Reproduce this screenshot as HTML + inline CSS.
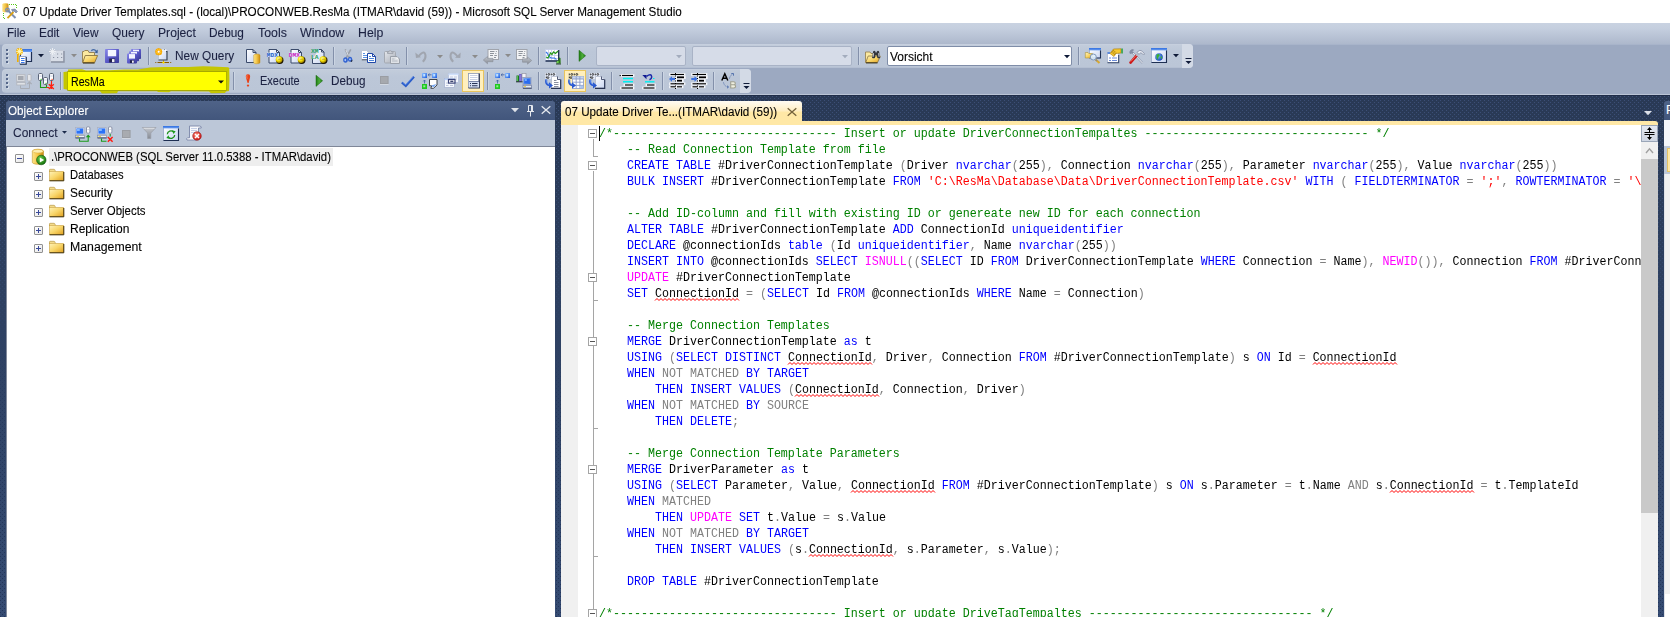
<!DOCTYPE html>
<html>
<head>
<meta charset="utf-8">
<title>SSMS</title>
<style>
html,body{margin:0;padding:0;}
body{width:1670px;height:617px;overflow:hidden;background:#fff;position:relative;font-family:"Liberation Sans",sans-serif;font-size:12px;color:#000;}
.abs,.r{position:absolute;}
svg{position:absolute;overflow:visible;}
.tx{position:absolute;white-space:pre;line-height:15px;font-size:12px;transform-origin:0 0;-webkit-text-stroke:0.1px;}
/* title */
#title{left:0;top:0;width:1670px;height:23px;background:#fff;}
/* menu */
#menu{left:0;top:23px;width:1670px;height:21px;background:linear-gradient(#c9d2e1,#c5cfdf 25%,#adb8cc);}
/* toolbars */
#tbarea{left:0;top:44px;width:1670px;height:50px;background:#9ca9c1;}
#tbtop{left:0;top:44px;width:1670px;height:1px;background:#a8b4ca;}
.tb{position:absolute;box-sizing:border-box;background:linear-gradient(#c2ccdb,#bcc7d8 30%,#bbc6d7);border-radius:4px;border:1px solid #c6cfde;border-bottom-color:#b4bfd2;}
.sep{position:absolute;width:1px;height:18px;background:#8390aa;box-shadow:1px 0 0 rgba(220,228,240,0.5);}
.gd{position:absolute;width:2px;height:2px;background:#56678a;box-shadow:1px 1px 0 rgba(235,240,248,0.55);}
.cb{position:absolute;box-sizing:border-box;border:1px solid #a9b3c6;background:#d6dce8;border-radius:2px;}
.hl{position:absolute;box-sizing:border-box;border:1px solid #e8c45e;background:#ffefbd;}
/* dark background */
#dark{left:0;top:95px;width:1670px;height:522px;background:#293955;}
/* object explorer */
#oehead{left:6px;top:101px;width:549px;height:19px;background:linear-gradient(#4f6388,#42567c);border-radius:3px 3px 0 0;}
#oetb{left:6px;top:120px;width:549px;height:26px;background:#bcc7d8;}
#oetree{left:6px;top:146px;width:549px;height:471px;background:#fff;border-top:1px solid #7f8798;border-left:1px solid #828a9c;box-sizing:border-box;}
#sel{left:49px;top:148px;width:284px;height:18px;background:#eeeeee;}
.ex{position:absolute;width:9px;height:9px;box-sizing:border-box;border:1px solid #919191;background:linear-gradient(135deg,#fff,#e6e6e6);border-radius:1px;}
.ex i{position:absolute;left:1px;top:3px;width:5px;height:1px;background:#3a4a9a;}
.ex b{position:absolute;left:3px;top:1px;width:1px;height:5px;background:#3a4a9a;}
/* editor */
#tab{left:561px;top:101px;width:241px;height:21px;background:linear-gradient(#fffcf4,#ffefc4 45%,#ffe8a6 55%,#ffe8a6);border-radius:3px 3px 0 0;}
#tabline{left:561px;top:121px;width:1097px;height:4px;background:#ffe8a6;border-radius:0 3px 0 0;}
#ed{left:561px;top:125px;width:1080px;height:492px;background:#fff;overflow:hidden;}
#margin{left:0;top:0;width:17px;height:492px;background:#f0f0f0;}
#code{left:38px;top:0.5px;width:1042px;height:492px;overflow:hidden;font-family:"Liberation Mono",monospace;font-size:11.667px;color:#000;}
.ln{height:16px;line-height:16px;white-space:pre;transform:scaleY(1.1);transform-origin:0 11.1px;}
.k{color:#0000ff}.c{color:#008000}.s{color:#ff0000}.f{color:#ff00ff}.g{color:#808080}
.ob{position:absolute;left:27px;width:9px;height:9px;box-sizing:border-box;border:1px solid #a5a5a5;background:#fff;}
.ob i{position:absolute;left:1px;top:3px;width:5px;height:1px;background:#555;}
.ol{position:absolute;background:#a5a5a5;}
#vs{left:1641px;top:125px;width:17px;height:492px;background:#f0f0f0;}
#vsthumb{left:1641px;top:159px;width:17px;height:354px;background:#c9c9c9;}
#vssplit{left:1641px;top:125px;width:17px;height:17px;box-sizing:border-box;border:1px solid #9aa6b8;background:linear-gradient(#e4e8f0,#cfd6e3);}
/* right panel sliver */
#rp{left:1664px;top:120px;width:6px;height:497px;background:linear-gradient(#f0f0f0,#f0f0f0 474px,#fff 474px);}
#rph{left:1664px;top:101px;width:6px;height:19px;background:linear-gradient(#4f6388,#42567c);border-radius:3px 0 0 0;overflow:hidden;}
#rp1{left:1664px;top:120px;width:6px;height:26px;background:#f4f6fa;}
#rp2{left:1664px;top:146px;width:6px;height:28px;background:#bcc7d8;}
#rp3{left:1667px;top:148px;width:3px;height:24px;background:#ffe8a6;border:1px solid #e5c365;border-right:0;box-sizing:border-box;}
#rp4{left:1664px;top:174px;width:1px;height:443px;background:#dfe2e8;}
</style>
</head>
<body>
<div id="title" class="abs"></div>
<div id="menu" class="abs"></div>
<div id="tbarea" class="abs"></div>
<div id="tbtop" class="abs"></div>
<div class="tb" style="left:2px;top:44px;width:1191px;height:24px"></div>
<div class="tb" style="left:2px;top:69px;width:749px;height:24px"></div>
<div class="r" style="left:1182px;top:44px;width:11px;height:24px;background:#d3dae6;border-radius:0 4px 4px 0"></div>
<div class="r" style="left:740px;top:69px;width:11px;height:24px;background:#d3dae6;border-radius:0 4px 4px 0"></div>
<!-- grips -->
<div class="gd" style="left:6px;top:49px"></div><div class="gd" style="left:6px;top:53px"></div><div class="gd" style="left:6px;top:57px"></div><div class="gd" style="left:6px;top:61px"></div>
<div class="gd" style="left:6px;top:74px"></div><div class="gd" style="left:6px;top:78px"></div><div class="gd" style="left:6px;top:82px"></div><div class="gd" style="left:6px;top:86px"></div>
<!-- separators row1 -->
<div class="sep" style="left:148px;top:47px"></div><div class="sep" style="left:333px;top:47px"></div><div class="sep" style="left:406px;top:47px"></div>
<div class="sep" style="left:538px;top:47px"></div><div class="sep" style="left:567px;top:47px"></div><div class="sep" style="left:858px;top:47px"></div><div class="sep" style="left:1078px;top:47px"></div>
<!-- separators row2 -->
<div class="sep" style="left:60px;top:72px"></div><div class="sep" style="left:233px;top:72px"></div><div class="sep" style="left:487px;top:72px"></div>
<div class="sep" style="left:538px;top:72px"></div><div class="sep" style="left:611px;top:72px"></div><div class="sep" style="left:662px;top:72px"></div><div class="sep" style="left:713px;top:72px"></div>
<!-- combos row1 -->
<div class="cb" style="left:596px;top:46px;width:90px;height:20px"></div>
<div class="cb" style="left:692px;top:46px;width:160px;height:20px"></div>
<div class="cb" style="left:887px;top:46px;width:185px;height:20px;background:#fff;border-color:#7f8da8"></div>
<!-- highlighted buttons row2 -->
<div class="hl" style="left:462px;top:70px;width:22px;height:22px"></div>
<div class="hl" style="left:564px;top:70px;width:22px;height:22px"></div>
<!-- yellow highlighter combo -->
<svg style="left:60px;top:64px" width="176" height="32" viewBox="60 64 176 32">
<path d="M63.5 72 L68 71.5 L68 69.5 L82 69.3 L86 70.4 L110 70.3 L124 69.6 L138 69.4 L150 67.6 L165 67 L188 67 L203 66.2 L212 66.4 L228 67.2 L229.2 68 L229.4 80 L229 91 L226 91.4 L225 93 L211 93.2 L209 91.4 L171 91.3 L169 92.2 L158 92 L157 91.2 L118 91.2 L117 93.2 L102 93.4 L100 91.3 L70 91.2 L68 90.5 L67 89.4 L63.6 89 Z" fill="#c5c600"/>
<rect x="67.5" y="72" width="159" height="18" fill="#ffff00"/>
<path d="M67.5 71.5 H226.5 V90.5 H67.5 Z" fill="none" stroke="#9a9c00" stroke-width="1" opacity="0.7"/>
<path d="M218 80.5 h6 l-3 3 z" fill="#111"/>
</svg>
<div id="dark" class="abs"></div>
<div class="r" style="left:0;top:94px;width:1670px;height:1px;background:#bac4d6"></div>
<svg style="left:0;top:95px" width="1670" height="522" viewBox="0 0 1670 522" shape-rendering="crispEdges">
<defs>
<pattern id="dp" width="4" height="4" patternUnits="userSpaceOnUse"><rect x="0" y="1" width="1" height="1" fill="#fff"/><rect x="2" y="3" width="1" height="1" fill="#fff"/></pattern>
<mask id="dm"><rect width="1670" height="522" fill="url(#dp)"/></mask>
<linearGradient id="bgG" x1="0" y1="0" x2="0" y2="1"><stop offset="0" stop-color="#293955"/><stop offset="1" stop-color="#354b72"/></linearGradient>
<linearGradient id="dotG" x1="0" y1="0" x2="0" y2="1"><stop offset="0" stop-color="#3d5077"/><stop offset="0.35" stop-color="#33476c"/><stop offset="0.6" stop-color="#283a5e"/><stop offset="1" stop-color="#24365a"/></linearGradient>
</defs>
<rect width="1670" height="522" fill="url(#bgG)"/>
<rect width="1670" height="522" fill="url(#dotG)" mask="url(#dm)"/>
<rect width="1670" height="1" fill="#1f2d49"/>
</svg>
<div id="oehead" class="abs"></div>
<div id="oetb" class="abs"></div>
<div id="oetree" class="abs"></div>
<div id="sel" class="abs"></div>
<!-- tree expanders -->
<div class="ex" style="left:15px;top:154px"><i></i></div>
<div class="ex" style="left:34px;top:172px"><i></i><b></b></div>
<div class="ex" style="left:34px;top:190px"><i></i><b></b></div>
<div class="ex" style="left:34px;top:208px"><i></i><b></b></div>
<div class="ex" style="left:34px;top:226px"><i></i><b></b></div>
<div class="ex" style="left:34px;top:244px"><i></i><b></b></div>
<div id="tab" class="abs"></div>
<div id="tabline" class="abs"></div>
<div id="ed" class="abs">
<div id="margin" class="abs"></div>
<!-- outlining -->
<div class="ol" style="left:32px;top:14px;width:1px;height:18px"></div><div class="ol" style="left:32px;top:31px;width:5px;height:1px"></div>
<div class="ol" style="left:32px;top:46px;width:1px;height:446px"></div>
<div class="ol" style="left:32px;top:175px;width:5px;height:1px"></div>
<div class="ol" style="left:32px;top:303px;width:5px;height:1px"></div>
<div class="ol" style="left:32px;top:431px;width:5px;height:1px"></div>
<div class="ob" style="top:4px"><i></i></div>
<div class="ob" style="top:36px"><i></i></div>
<div class="ob" style="top:148px"><i></i></div>
<div class="ob" style="top:212px"><i></i></div>
<div class="ob" style="top:340px"><i></i></div>
<div class="ob" style="top:484px"><i></i></div>
<div class="r" style="left:38px;top:1px;width:1px;height:15px;background:#000"></div>
<svg style="left:94px;top:173px" width="84" height="3" viewBox="0 0 84 3"><path d="M0 2.5 L2 0.5 L4 2.5 L6 0.5 L8 2.5 L10 0.5 L12 2.5 L14 0.5 L16 2.5 L18 0.5 L20 2.5 L22 0.5 L24 2.5 L26 0.5 L28 2.5 L30 0.5 L32 2.5 L34 0.5 L36 2.5 L38 0.5 L40 2.5 L42 0.5 L44 2.5 L46 0.5 L48 2.5 L50 0.5 L52 2.5 L54 0.5 L56 2.5 L58 0.5 L60 2.5 L62 0.5 L64 2.5 L66 0.5 L68 2.5 L70 0.5 L72 2.5 L74 0.5 L76 2.5 L78 0.5 L80 2.5 L82 0.5 L84 2.5" fill="none" stroke="#ff0000" stroke-width="1"/></svg>
<svg style="left:227px;top:237px" width="84" height="3" viewBox="0 0 84 3"><path d="M0 2.5 L2 0.5 L4 2.5 L6 0.5 L8 2.5 L10 0.5 L12 2.5 L14 0.5 L16 2.5 L18 0.5 L20 2.5 L22 0.5 L24 2.5 L26 0.5 L28 2.5 L30 0.5 L32 2.5 L34 0.5 L36 2.5 L38 0.5 L40 2.5 L42 0.5 L44 2.5 L46 0.5 L48 2.5 L50 0.5 L52 2.5 L54 0.5 L56 2.5 L58 0.5 L60 2.5 L62 0.5 L64 2.5 L66 0.5 L68 2.5 L70 0.5 L72 2.5 L74 0.5 L76 2.5 L78 0.5 L80 2.5 L82 0.5 L84 2.5" fill="none" stroke="#ff0000" stroke-width="1"/></svg>
<svg style="left:752px;top:237px" width="84" height="3" viewBox="0 0 84 3"><path d="M0 2.5 L2 0.5 L4 2.5 L6 0.5 L8 2.5 L10 0.5 L12 2.5 L14 0.5 L16 2.5 L18 0.5 L20 2.5 L22 0.5 L24 2.5 L26 0.5 L28 2.5 L30 0.5 L32 2.5 L34 0.5 L36 2.5 L38 0.5 L40 2.5 L42 0.5 L44 2.5 L46 0.5 L48 2.5 L50 0.5 L52 2.5 L54 0.5 L56 2.5 L58 0.5 L60 2.5 L62 0.5 L64 2.5 L66 0.5 L68 2.5 L70 0.5 L72 2.5 L74 0.5 L76 2.5 L78 0.5 L80 2.5 L82 0.5 L84 2.5" fill="none" stroke="#ff0000" stroke-width="1"/></svg>
<svg style="left:234px;top:269px" width="84" height="3" viewBox="0 0 84 3"><path d="M0 2.5 L2 0.5 L4 2.5 L6 0.5 L8 2.5 L10 0.5 L12 2.5 L14 0.5 L16 2.5 L18 0.5 L20 2.5 L22 0.5 L24 2.5 L26 0.5 L28 2.5 L30 0.5 L32 2.5 L34 0.5 L36 2.5 L38 0.5 L40 2.5 L42 0.5 L44 2.5 L46 0.5 L48 2.5 L50 0.5 L52 2.5 L54 0.5 L56 2.5 L58 0.5 L60 2.5 L62 0.5 L64 2.5 L66 0.5 L68 2.5 L70 0.5 L72 2.5 L74 0.5 L76 2.5 L78 0.5 L80 2.5 L82 0.5 L84 2.5" fill="none" stroke="#ff0000" stroke-width="1"/></svg>
<svg style="left:290px;top:365px" width="84" height="3" viewBox="0 0 84 3"><path d="M0 2.5 L2 0.5 L4 2.5 L6 0.5 L8 2.5 L10 0.5 L12 2.5 L14 0.5 L16 2.5 L18 0.5 L20 2.5 L22 0.5 L24 2.5 L26 0.5 L28 2.5 L30 0.5 L32 2.5 L34 0.5 L36 2.5 L38 0.5 L40 2.5 L42 0.5 L44 2.5 L46 0.5 L48 2.5 L50 0.5 L52 2.5 L54 0.5 L56 2.5 L58 0.5 L60 2.5 L62 0.5 L64 2.5 L66 0.5 L68 2.5 L70 0.5 L72 2.5 L74 0.5 L76 2.5 L78 0.5 L80 2.5 L82 0.5 L84 2.5" fill="none" stroke="#ff0000" stroke-width="1"/></svg>
<svg style="left:829px;top:365px" width="84" height="3" viewBox="0 0 84 3"><path d="M0 2.5 L2 0.5 L4 2.5 L6 0.5 L8 2.5 L10 0.5 L12 2.5 L14 0.5 L16 2.5 L18 0.5 L20 2.5 L22 0.5 L24 2.5 L26 0.5 L28 2.5 L30 0.5 L32 2.5 L34 0.5 L36 2.5 L38 0.5 L40 2.5 L42 0.5 L44 2.5 L46 0.5 L48 2.5 L50 0.5 L52 2.5 L54 0.5 L56 2.5 L58 0.5 L60 2.5 L62 0.5 L64 2.5 L66 0.5 L68 2.5 L70 0.5 L72 2.5 L74 0.5 L76 2.5 L78 0.5 L80 2.5 L82 0.5 L84 2.5" fill="none" stroke="#ff0000" stroke-width="1"/></svg>
<svg style="left:248px;top:429px" width="84" height="3" viewBox="0 0 84 3"><path d="M0 2.5 L2 0.5 L4 2.5 L6 0.5 L8 2.5 L10 0.5 L12 2.5 L14 0.5 L16 2.5 L18 0.5 L20 2.5 L22 0.5 L24 2.5 L26 0.5 L28 2.5 L30 0.5 L32 2.5 L34 0.5 L36 2.5 L38 0.5 L40 2.5 L42 0.5 L44 2.5 L46 0.5 L48 2.5 L50 0.5 L52 2.5 L54 0.5 L56 2.5 L58 0.5 L60 2.5 L62 0.5 L64 2.5 L66 0.5 L68 2.5 L70 0.5 L72 2.5 L74 0.5 L76 2.5 L78 0.5 L80 2.5 L82 0.5 L84 2.5" fill="none" stroke="#ff0000" stroke-width="1"/></svg>
<div id="code" class="abs">
<div class="ln"><span class="c">/*-------------------------------- Insert or update DriverConnectionTempaltes -------------------------------- */</span></div>
<div class="ln">    <span class="c">-- Read Connection Template from file</span></div>
<div class="ln">    <span class="k">CREATE TABLE</span> #DriverConnectionTemplate <span class="g">(</span>Driver <span class="k">nvarchar</span><span class="g">(</span>255<span class="g">),</span> Connection <span class="k">nvarchar</span><span class="g">(</span>255<span class="g">),</span> Parameter <span class="k">nvarchar</span><span class="g">(</span>255<span class="g">),</span> Value <span class="k">nvarchar</span><span class="g">(</span>255<span class="g">))</span></div>
<div class="ln">    <span class="k">BULK INSERT</span> #DriverConnectionTemplate <span class="k">FROM</span> <span class="s">'C:\ResMa\Database\Data\DriverConnectionTemplate.csv'</span> <span class="k">WITH</span> <span class="g">(</span> <span class="k">FIELDTERMINATOR</span> <span class="g">=</span> <span class="s">';'</span><span class="g">,</span> <span class="k">ROWTERMINATOR</span> <span class="g">=</span> <span class="s">'\r\n'</span></div>
<div class="ln">&nbsp;</div>
<div class="ln">    <span class="c">-- Add ID-column and fill with existing ID or genereate new ID for each connection</span></div>
<div class="ln">    <span class="k">ALTER TABLE</span> #DriverConnectionTemplate <span class="k">ADD</span> ConnectionId <span class="k">uniqueidentifier</span></div>
<div class="ln">    <span class="k">DECLARE</span> @connectionIds <span class="k">table</span> <span class="g">(</span>Id <span class="k">uniqueidentifier</span><span class="g">,</span> Name <span class="k">nvarchar</span><span class="g">(</span>255<span class="g">))</span></div>
<div class="ln">    <span class="k">INSERT INTO</span> @connectionIds <span class="k">SELECT</span> <span class="f">ISNULL</span><span class="g">((</span><span class="k">SELECT</span> ID <span class="k">FROM</span> DriverConnectionTemplate <span class="k">WHERE</span> Connection <span class="g">=</span> Name<span class="g">),</span> <span class="f">NEWID</span><span class="g">()),</span> Connection <span class="k">FROM</span> #DriverConnectionTemplate</div>
<div class="ln">    <span class="f">UPDATE</span> #DriverConnectionTemplate</div>
<div class="ln">    <span class="k">SET</span> <span class="q">ConnectionId</span> <span class="g">=</span> <span class="g">(</span><span class="k">SELECT</span> Id <span class="k">FROM</span> @connectionIds <span class="k">WHERE</span> Name <span class="g">=</span> Connection<span class="g">)</span></div>
<div class="ln">&nbsp;</div>
<div class="ln">    <span class="c">-- Merge Connection Templates</span></div>
<div class="ln">    <span class="k">MERGE</span> DriverConnectionTemplate <span class="k">as</span> t</div>
<div class="ln">    <span class="k">USING</span> <span class="g">(</span><span class="k">SELECT DISTINCT</span> <span class="q">ConnectionId</span><span class="g">,</span> Driver<span class="g">,</span> Connection <span class="k">FROM</span> #DriverConnectionTemplate<span class="g">)</span> s <span class="k">ON</span> Id <span class="g">=</span> <span class="q">ConnectionId</span></div>
<div class="ln">    <span class="k">WHEN</span> <span class="g">NOT MATCHED</span> <span class="k">BY TARGET</span></div>
<div class="ln">        <span class="k">THEN INSERT VALUES</span> <span class="g">(</span><span class="q">ConnectionId</span><span class="g">,</span> Connection<span class="g">,</span> Driver<span class="g">)</span></div>
<div class="ln">    <span class="k">WHEN</span> <span class="g">NOT MATCHED</span> <span class="k">BY</span> <span class="g">SOURCE</span></div>
<div class="ln">        <span class="k">THEN DELETE</span><span class="g">;</span></div>
<div class="ln">&nbsp;</div>
<div class="ln">    <span class="c">-- Merge Connection Template Parameters</span></div>
<div class="ln">    <span class="k">MERGE</span> DriverParameter <span class="k">as</span> t</div>
<div class="ln">    <span class="k">USING</span> <span class="g">(</span><span class="k">SELECT</span> Parameter<span class="g">,</span> Value<span class="g">,</span> <span class="q">ConnectionId</span> <span class="k">FROM</span> #DriverConnectionTemplate<span class="g">)</span> s <span class="k">ON</span> s<span class="g">.</span>Parameter <span class="g">=</span> t<span class="g">.</span>Name <span class="g">AND</span> s<span class="g">.</span><span class="q">ConnectionId</span> <span class="g">=</span> t<span class="g">.</span>TemplateId</div>
<div class="ln">    <span class="k">WHEN</span> <span class="g">MATCHED</span></div>
<div class="ln">        <span class="k">THEN</span> <span class="f">UPDATE</span> <span class="k">SET</span> t<span class="g">.</span>Value <span class="g">=</span> s<span class="g">.</span>Value</div>
<div class="ln">    <span class="k">WHEN</span> <span class="g">NOT MATCHED</span> <span class="k">BY TARGET</span></div>
<div class="ln">        <span class="k">THEN INSERT VALUES</span> <span class="g">(</span>s<span class="g">.</span><span class="q">ConnectionId</span><span class="g">,</span> s<span class="g">.</span>Parameter<span class="g">,</span> s<span class="g">.</span>Value<span class="g">);</span></div>
<div class="ln">&nbsp;</div>
<div class="ln">    <span class="k">DROP TABLE</span> #DriverConnectionTemplate</div>
<div class="ln">&nbsp;</div>
<div class="ln"><span class="c">/*-------------------------------- Insert or update DriveTagTempaltes -------------------------------- */</span></div>
</div>
</div>
<div id="vs" class="abs"></div>
<div id="vsthumb" class="abs"></div>
<div id="vssplit" class="abs"></div>
<svg style="left:1641px;top:125px" width="17" height="34" viewBox="0 0 17 34">
<path d="M3.5 7.5 H13.5 M3.5 9.5 H13.5" stroke="#000" stroke-width="1" fill="none"/>
<path d="M8.5 3 V7 M8.5 10 V14" stroke="#000" stroke-width="1" fill="none"/>
<path d="M6 5 L8.5 2 L11 5 Z M6 12 L8.5 15 L11 12 Z" fill="#000"/>
<path d="M5 28 L8.5 23.9 L12 28" stroke="#a0a0a0" stroke-width="1.4" fill="none"/>
</svg>
<!-- tab dropdown arrow -->
<svg style="left:1644px;top:111px" width="8" height="4" viewBox="0 0 8 4"><path d="M0 0 H8 L4 4.2 Z" fill="#dde1e8"/></svg>
<!-- right panel sliver -->
<div id="rp" class="abs"></div><div id="rph" class="abs"><div class="tx" style="left:2px;top:2px;color:#fff">P</div></div><div id="rp1" class="abs"></div><div id="rp2" class="abs"></div><div id="rp3" class="abs"></div><div id="rp4" class="abs"></div>
<div class="tx" style="left:22.6px;top:5px;color:#000;transform:scaleX(0.9742);">07 Update Driver Templates.sql - (local)\PROCONWEB.ResMa (ITMAR\david (59)) - Microsoft SQL Server Management Studio</div>
<div class="tx" style="left:7.1px;top:26px;color:#1c2242;transform:scaleX(0.9707);">File</div>
<div class="tx" style="left:38.6px;top:26px;color:#1c2242;transform:scaleX(0.9855);">Edit</div>
<div class="tx" style="left:72.6px;top:26px;color:#1c2242;transform:scaleX(0.9881);">View</div>
<div class="tx" style="left:111.6px;top:26px;color:#1c2242;transform:scaleX(0.9941);">Query</div>
<div class="tx" style="left:157.6px;top:26px;color:#1c2242;transform:scaleX(1.0121);">Project</div>
<div class="tx" style="left:209.1px;top:26px;color:#1c2242;transform:scaleX(0.9863);">Debug</div>
<div class="tx" style="left:257.6px;top:26px;color:#1c2242;transform:scaleX(1.0288);">Tools</div>
<div class="tx" style="left:300.0px;top:26px;color:#1c2242;transform:scaleX(1.0385);">Window</div>
<div class="tx" style="left:357.8px;top:26px;color:#1c2242;transform:scaleX(1.0256);">Help</div>
<div class="tx" style="left:174.6px;top:49px;color:#1c2242;transform:scaleX(0.9877);">New Query</div>
<div class="tx" style="left:260.3px;top:74px;color:#1c2242;transform:scaleX(0.9140);">Execute</div>
<div class="tx" style="left:331.4px;top:74px;color:#1c2242;transform:scaleX(0.9747);">Debug</div>
<div class="tx" style="left:889.8px;top:50px;color:#000;transform:scaleX(0.9979);">Vorsicht</div>
<div class="tx" style="left:70.6px;top:75px;color:#000;transform:scaleX(0.8867);">ResMa</div>
<div class="tx" style="left:7.9px;top:104px;color:#fff;transform:scaleX(0.9731);">Object Explorer</div>
<div class="tx" style="left:13.3px;top:126px;color:#1c2242;transform:scaleX(0.9977);">Connect</div>
<div class="tx" style="left:564.6px;top:105px;color:#000;transform:scaleX(0.9709);">07 Update Driver Te...(ITMAR\david (59))</div>
<div class="tx" style="left:51.0px;top:150px;color:#000;transform:scaleX(0.9455);">.\PROCONWEB (SQL Server 11.0.5388 - ITMAR\david)</div>
<div class="tx" style="left:69.6px;top:168px;color:#000;transform:scaleX(0.9350);">Databases</div>
<div class="tx" style="left:69.6px;top:186px;color:#000;transform:scaleX(0.9869);">Security</div>
<div class="tx" style="left:69.6px;top:204px;color:#000;transform:scaleX(0.9521);">Server Objects</div>
<div class="tx" style="left:69.6px;top:222px;color:#000;transform:scaleX(1.0004);">Replication</div>
<div class="tx" style="left:69.6px;top:240px;color:#000;transform:scaleX(1.0239);">Management</div>
<svg width="0" height="0" style="left:0;top:0"><defs>
<linearGradient id="gy" x1="0" y1="0" x2="1" y2="0"><stop offset="0" stop-color="#fbe38a"/><stop offset="0.45" stop-color="#f6c84a"/><stop offset="1" stop-color="#c98a12"/></linearGradient>
<linearGradient id="gfold" x1="0" y1="0" x2="1" y2="1"><stop offset="0" stop-color="#fff3b8"/><stop offset="0.5" stop-color="#f8d568"/><stop offset="1" stop-color="#e0a020"/></linearGradient>
<linearGradient id="gdoc" x1="0" y1="0" x2="1" y2="1"><stop offset="0" stop-color="#ffffff"/><stop offset="1" stop-color="#c9d6f2"/></linearGradient>
<linearGradient id="gflop" x1="0" y1="0" x2="1" y2="1"><stop offset="0" stop-color="#8a8ae8"/><stop offset="0.5" stop-color="#5a5ac8"/><stop offset="1" stop-color="#3a3a98"/></linearGradient>
<linearGradient id="ggray" x1="0" y1="0" x2="1" y2="1"><stop offset="0" stop-color="#e4e7ec"/><stop offset="1" stop-color="#a9aeb8"/></linearGradient>
<linearGradient id="ggray2" x1="0" y1="0" x2="0" y2="1"><stop offset="0" stop-color="#c4c8cf"/><stop offset="1" stop-color="#868b95"/></linearGradient>
<linearGradient id="ggreen" x1="0" y1="0" x2="1" y2="0"><stop offset="0" stop-color="#1f7a12"/><stop offset="0.5" stop-color="#4cae3a"/><stop offset="1" stop-color="#1f7a12"/></linearGradient>
<linearGradient id="gblue" x1="0" y1="0" x2="1" y2="1"><stop offset="0" stop-color="#8fc0ff"/><stop offset="1" stop-color="#1f5fe0"/></linearGradient>
<linearGradient id="gtitle" x1="0" y1="0" x2="0" y2="1"><stop offset="0" stop-color="#2f6ee0"/><stop offset="1" stop-color="#6fa0f0"/></linearGradient>
<radialGradient id="gcube" cx="0.4" cy="0.35" r="0.7"><stop offset="0" stop-color="#fffbb0"/><stop offset="0.5" stop-color="#f5e000"/><stop offset="1" stop-color="#8a6a00"/></radialGradient>
<radialGradient id="gstar" cx="0.5" cy="0.5" r="0.5"><stop offset="0" stop-color="#ffffff"/><stop offset="0.4" stop-color="#ffe14a"/><stop offset="1" stop-color="#f0a800"/></radialGradient>
<radialGradient id="gglobe" cx="0.4" cy="0.4" r="0.6"><stop offset="0" stop-color="#7ab8ff"/><stop offset="1" stop-color="#1848b8"/></radialGradient>
<radialGradient id="gred" cx="0.4" cy="0.35" r="0.7"><stop offset="0" stop-color="#ff8a7a"/><stop offset="1" stop-color="#c81010"/></radialGradient>
<radialGradient id="ggrn" cx="0.4" cy="0.35" r="0.7"><stop offset="0" stop-color="#6ad04a"/><stop offset="1" stop-color="#0f6a0a"/></radialGradient>
</defs></svg>
<svg style="left:2px;top:3px" width="16" height="16" viewBox="0 0 16 16"><path d="M0.3 1.6 A3.1 1.3 0 0 1 6.5 1.6 V8 A3.1 1.3 0 0 1 0.3 8 Z" fill="url(#gy)"/><path d="M7 1.5 H14.5 V5 M1.5 10 V15.5 H4" fill="none" stroke="#58c818" stroke-width="1" stroke-dasharray="1 1"/><path d="M5.5 7 L13.5 15" stroke="#7f8fb0" stroke-width="2"/><circle cx="5.5" cy="7" r="1.8" fill="none" stroke="#7f8fb0" stroke-width="1.3"/><path d="M5.5 15.2 L11.5 9" stroke="#d8a018" stroke-width="1.8"/><path d="M9.5 6.5 L13 6 L15.5 8.5 L14 10 L12 8 L10.5 8.5 Z" fill="#8c98b4" stroke="#5a6888" stroke-width="0.5"/></svg>
<svg style="left:16px;top:48px" width="16" height="16" viewBox="0 0 16 16"><rect x="4.5" y="1.5" width="11" height="12" fill="url(#gdoc)" stroke="#2a3f66" stroke-width="1"/><rect x="4" y="1" width="12" height="3" fill="url(#gtitle)"/><path d="M15.5 4 V13.5 H5" fill="none" stroke="#1e2f52" stroke-width="1.2"/><rect x="1" y="6" width="1.6" height="8" fill="#f0b000"/><circle cx="3.5" cy="3.5" r="3.4" fill="url(#gstar)"/><path d="M3.5 0 V7 M0 3.5 H7 M1 1 L6 6 M6 1 L1 6" stroke="#fff6c0" stroke-width="0.7" fill="none"/><rect x="3.5" y="8.5" width="6.5" height="7.5" fill="#fff" stroke="#8a98b8" stroke-width="0.8"/><path d="M10.3 9 V16.2 H4" fill="none" stroke="#1e2f52" stroke-width="1.1"/><path d="M5 10.5 H8.6 M5 12.5 H8.6 M5 14.5 H8.6" stroke="#3a78e8" stroke-width="1"/></svg>
<svg style="left:49px;top:48px" width="16" height="16" viewBox="0 0 16 16"><rect x="1.5" y="2.5" width="13" height="11" fill="#d9dee7" stroke="#c4cad6" stroke-width="1"/><path d="M15 3 V14 H2" fill="none" stroke="#8b93a3" stroke-width="1.4"/><path d="M8 6 h1.2 M12 6 h1.2 M4 9.5 h1.2 M8 9.5 h1.2 M12 9.5 h1.2" stroke="#8b93a3" stroke-width="1.2"/><path d="M3.5 0 V7 M0 3.5 H7 M1 1 L6 6 M6 1 L1 6" stroke="#eef0f4" stroke-width="0.9" fill="none"/></svg>
<svg style="left:82px;top:48px" width="16" height="16" viewBox="0 0 16 16"><path d="M0.5 14.5 V3.5 H2 L2.8 2.5 H6 L7 4.5 H12.5 V7.5" fill="#fbe9a0" stroke="#9a8658" stroke-width="1"/><path d="M0.7 14.7 L3.2 7.5 H15.6 L12.6 14.7 Z" fill="url(#gfold)" stroke="#8a7440" stroke-width="0.9"/><path d="M1 15 H12.5" stroke="#2a2000" stroke-width="0.9"/><path d="M9.3 2.8 Q11.8 0.2 14.3 3.2" fill="none" stroke="#4a6ea8" stroke-width="1.3"/><path d="M15.8 1.6 L15.6 5.2 L12.4 4.4 Z" fill="#3a5e98"/></svg>
<svg style="left:105px;top:49px" width="16" height="16" viewBox="0 0 16 16"><rect x="0" y="0" width="14" height="14" rx="0.8" fill="url(#gflop)"/><rect x="2.8" y="0.98" width="8.4" height="6.3" fill="#f4f6ff"/><rect x="4.2" y="9.52" width="5.88" height="3.92" fill="#22224a"/><rect x="7" y="10.08" width="2.52" height="3.08" fill="#f0f0f8"/></svg>
<svg style="left:127px;top:49px" width="16" height="16" viewBox="0 0 16 16"><rect x="4" y="0" width="10" height="10" rx="0.8" fill="url(#gflop)"/><rect x="6" y="0.7" width="6" height="4.5" fill="#f4f6ff"/><rect x="7" y="6.8" width="4.2" height="2.8" fill="#22224a"/><rect x="9" y="7.2" width="1.8" height="2.2" fill="#f0f0f8"/><rect x="2" y="2.2" width="10" height="10" rx="0.8" fill="url(#gflop)"/><rect x="4" y="2.9" width="6" height="4.5" fill="#f4f6ff"/><rect x="5" y="9" width="4.2" height="2.8" fill="#22224a"/><rect x="7" y="9.4" width="1.8" height="2.2" fill="#f0f0f8"/><rect x="0" y="4.4" width="10" height="10" rx="0.8" fill="url(#gflop)"/><rect x="2" y="5.1" width="6" height="4.5" fill="#f4f6ff"/><rect x="3" y="11.2" width="4.2" height="2.8" fill="#22224a"/><rect x="5" y="11.6" width="1.8" height="2.2" fill="#f0f0f8"/></svg>
<svg style="left:155px;top:48px" width="16" height="16" viewBox="0 0 16 16"><rect x="4" y="1.5" width="7.5" height="10" fill="url(#gdoc)"/><path d="M12 3 V12 H3.5" fill="none" stroke="#3c4858" stroke-width="1.2"/><path d="M9.5 1.5 L12 4" stroke="#3c4858" stroke-width="1"/><rect x="10" y="1.8" width="1.2" height="1.2" fill="#fff"/><path d="M8.5 12.5 V14" stroke="#8a5a00" stroke-width="1"/><path d="M2.5 14.5 H14" stroke="#8a5a00" stroke-width="1"/><rect x="0.3" y="14" width="1" height="1" fill="#8a5a00"/><rect x="15.2" y="14" width="1" height="1" fill="#8a5a00"/><path d="M8.5 13 L9.8 14.5 L8.5 16 L7.2 14.5 Z" fill="#ffe000"/><circle cx="3.7" cy="3.7" r="3.5" fill="url(#gstar)"/><path d="M3.7 0.2 V7.2 M0.2 3.7 H7.2 M1.2 1.2 L6.2 6.2 M6.2 1.2 L1.2 6.2" stroke="#ff9a00" stroke-width="0.7"/><circle cx="3.7" cy="3.7" r="1" fill="#fff"/></svg>
<svg style="left:246px;top:49px" width="16" height="16" viewBox="0 0 16 16"><path d="M0.5 0.5 H7 L10 3.5 V13.5 H0.5 Z" fill="url(#gdoc)" stroke="#3a4a6a" stroke-width="1"/><path d="M7 0.5 V3.5 H10" fill="none" stroke="#3a4a6a" stroke-width="1"/><path d="M7.7 6 A3.2 1.2 0 0 1 14 6 V13.8 A3.2 1.2 0 0 1 7.7 13.8 Z" fill="url(#gy)" stroke="#c08a10" stroke-width="0.4"/></svg>
<svg style="left:267px;top:49px" width="16" height="16" viewBox="0 0 16 16"><path d="M2 0.5 H9.5 L12.5 3.5 V14 H2 Z" fill="url(#gdoc)" stroke="#3a4a6a" stroke-width="1"/><path d="M9.5 0.5 V3.5 H12.5" fill="none" stroke="#3a4a6a" stroke-width="1"/><rect x="0" y="3.6" width="10" height="4.4" fill="#e8eefa" fill-opacity="0.9"/><text x="-0.2" y="7.9" font-family="Liberation Mono,monospace" font-weight="bold" font-size="5.6" textLength="11" lengthAdjust="spacingAndGlyphs" fill="#1860c8">MDX</text><circle cx="12.8" cy="11.3" r="3.7" fill="#1a1400"/><circle cx="12.1" cy="10.6" r="3.4" fill="url(#gcube)"/><path d="M11.1 10.2 h3" stroke="#a88a00" stroke-width="0.7"/></svg>
<svg style="left:289px;top:49px" width="16" height="16" viewBox="0 0 16 16"><path d="M2 0.5 H9.5 L12.5 3.5 V14 H2 Z" fill="url(#gdoc)" stroke="#3a4a6a" stroke-width="1"/><path d="M9.5 0.5 V3.5 H12.5" fill="none" stroke="#3a4a6a" stroke-width="1"/><rect x="0" y="3.6" width="10" height="4.4" fill="#e8eefa" fill-opacity="0.9"/><text x="-0.2" y="7.9" font-family="Liberation Mono,monospace" font-weight="bold" font-size="5.6" textLength="11" lengthAdjust="spacingAndGlyphs" fill="#c818c0">DMX</text><circle cx="12.8" cy="11.3" r="3.7" fill="#1a1400"/><circle cx="12.1" cy="10.6" r="3.4" fill="url(#gcube)"/><path d="M11.1 10.2 h3" stroke="#a88a00" stroke-width="0.7"/></svg>
<svg style="left:311px;top:49px" width="16" height="16" viewBox="0 0 16 16"><path d="M8 0.5 H10.5 L13 3 V14.5 H1.5 V10" fill="url(#gdoc)" stroke="#3a4a6a" stroke-width="1"/><path d="M10.5 0.5 V3 H13" fill="none" stroke="#3a4a6a" stroke-width="1"/><text x="0" y="4.3" font-family="Liberation Mono,monospace" font-weight="bold" font-size="5.6" textLength="7.6" lengthAdjust="spacingAndGlyphs" fill="#28a060">XM</text><text x="0" y="9.6" font-family="Liberation Mono,monospace" font-weight="bold" font-size="5.6" textLength="7.6" lengthAdjust="spacingAndGlyphs" fill="#28a060">LA</text><circle cx="12.8" cy="11.3" r="3.7" fill="#1a1400"/><circle cx="12.1" cy="10.6" r="3.4" fill="url(#gcube)"/><path d="M11.1 10.2 h3" stroke="#a88a00" stroke-width="0.7"/></svg>
<svg style="left:343px;top:49px" width="16" height="16" viewBox="0 0 16 16"><path d="M2.2 0.3 L6.3 8.6 M7.8 0.3 L3.2 8.8" stroke="#9aa0aa" stroke-width="1.6" fill="none"/><path d="M2.9 1 L5.4 6.5" stroke="#e8ebf0" stroke-width="0.8"/><ellipse cx="2.5" cy="11" rx="2.3" ry="2.7" fill="#2f60d0"/><ellipse cx="2.3" cy="11" rx="0.9" ry="1.2" fill="#a8c4f8"/><ellipse cx="7.1" cy="10.3" rx="2.2" ry="2.5" fill="#2f60d0"/><ellipse cx="7" cy="10.3" rx="0.9" ry="1.1" fill="#a8c4f8"/><path d="M8 12.6 L9.3 11.4" stroke="#101830" stroke-width="1.2"/></svg>
<svg style="left:361.3px;top:49.5px" width="16" height="16" viewBox="0 0 16 16"><path d="M0.5 0.5 H5.5 L8 3 V9.5 H0.5 Z" fill="#fff" stroke="#b8c0d0" stroke-width="0.8"/><path d="M0.8 9.8 H7.5" stroke="#404858" stroke-width="0.9"/><path d="M2 3.5 H4 M2 5.5 H6 M2 7.5 H6" stroke="#4a88e0" stroke-width="0.9"/><path d="M6.5 3.5 H11.5 L14.5 6.5 V12.5 H6.5 Z" fill="#fff" stroke="#2048a8" stroke-width="1"/><path d="M11.5 3.5 V6.5 H14.5" fill="none" stroke="#2048a8" stroke-width="1"/><path d="M8 6.5 H10 M8 8.5 H13 M8 10.5 H13" stroke="#3a78d8" stroke-width="0.9"/></svg>
<svg style="left:384px;top:49.5px" width="16" height="16" viewBox="0 0 16 16"><rect x="0.5" y="1.5" width="11" height="11.5" rx="1" fill="url(#ggray)" stroke="#a4a9b2" stroke-width="1"/><path d="M3.5 3.5 V2 H4.8 A1.4 1.4 0 0 1 7.6 2 H9 V3.5 Z" fill="#c8ccd4" stroke="#9aa0aa" stroke-width="0.8"/><path d="M6.5 6.5 H13 L15.5 9 V13.5 H6.5 Z" fill="#dfe2e7" stroke="#9aa0aa" stroke-width="1"/><path d="M8 9 H10.5 M8 11 H13.5" stroke="#aeb3bc" stroke-width="0.9"/><circle cx="13.2" cy="8.2" r="0.7" fill="#fff"/></svg>
<svg style="left:414.5px;top:49.8px" width="16" height="16" viewBox="0 0 16 16"><path d="M3.5 6.5 Q9.5 -1 10.5 5.5 Q10.8 9 7.8 11.8" fill="none" stroke="#a0a5af" stroke-width="2"/><path d="M0.3 2.5 L1 8 L6 7.2 Z" fill="#a0a5af"/></svg>
<svg style="left:449.3px;top:49.8px" width="16" height="16" viewBox="0 0 16 16"><path d="M8.5 6.5 Q2.5 -1 1.5 5.5 Q1.2 9 4.2 11.8" fill="none" stroke="#a0a5af" stroke-width="2"/><path d="M11.7 2.5 L11.3 8 L6 7.8 Z" fill="#a0a5af"/></svg>
<svg style="left:483px;top:49px" width="16" height="16" viewBox="0 0 16 16"><rect x="5" y="0.5" width="10.5" height="10" fill="#f2f3f5" stroke="#a0a4ac" stroke-width="1"/><path d="M7 2.5 h4.5 M12.8 2.5 h1 M7 4.5 h4 M12.3 4.5 h1 M7 6.5 h3 M11.3 6.5 h2.6 M11 8.5 h2" stroke="#8f949c" stroke-width="1"/><path d="M0.3 11 L4.5 7.5 V9.3 H10 V12.7 H4.5 V14.8 Z" fill="url(#ggray2)" stroke="#8a8f99" stroke-width="0.6"/></svg>
<svg style="left:516px;top:49px" width="16" height="16" viewBox="0 0 16 16"><rect x="0.5" y="0.5" width="10.5" height="10" fill="#f2f3f5" stroke="#a0a4ac" stroke-width="1"/><path d="M2.5 2.5 h4.5 M8.3 2.5 h1 M2.5 4.5 h4 M7.8 4.5 h1 M2.5 6.5 h3 M6.8 6.5 h2.6 M6.5 8.5 h2" stroke="#8f949c" stroke-width="1"/><path d="M15.7 11.5 L11.5 8 V9.8 H6.5 V13.2 H11.5 V15.2 Z" fill="url(#ggray2)" stroke="#8a8f99" stroke-width="0.6"/></svg>
<svg style="left:545px;top:49px" width="16" height="16" viewBox="0 0 16 16"><rect x="0.5" y="0.5" width="13" height="11" fill="#fff" stroke="#c8d0e8" stroke-width="1"/><path d="M3.5 1 V11 M6.5 1 V11 M9.5 1 V11 M1 3.5 H13 M1 6.5 H13 M1 9.5 H13" stroke="#c4cde8" stroke-width="0.8"/><path d="M13.7 1 V12 H0.5" fill="none" stroke="#1e2f52" stroke-width="1.3"/><path d="M1 3 L2.5 4.5 L4.5 8 L6.5 9 L9.5 9 L11.5 10.5" fill="none" stroke="#3a78e8" stroke-width="1.2"/><path d="M1 8 L3 9 L5.5 4 L7 5.5 L8.5 3 L10.5 4.5 L13 2" fill="none" stroke="#2a9a1a" stroke-width="1.2"/><path d="M11.5 14.5 V11.5 L13 12.5 L14 8.5 L15.5 9 L15.7 14.5 Z" fill="#2a7a18"/><circle cx="12.8" cy="13" r="1" fill="#7ad858"/><path d="M11 15 H16" stroke="#0a2a06" stroke-width="0.8"/></svg>
<svg style="left:579px;top:50px" width="16" height="16" viewBox="0 0 16 16"><path d="M0 0.2 L6.6 5.8 L0 11.4 Z" fill="url(#ggreen)"/><path d="M0 0.2 L6.6 5.8 L0 11.4 Z" fill="none" stroke="#1a6a10" stroke-width="0.5"/></svg>
<svg style="left:865px;top:50px" width="16" height="16" viewBox="0 0 16 16"><path d="M0.5 12.5 V2 H5 L6 3.5 H11.5 V6" fill="#fbe9a0" stroke="#9a8658" stroke-width="0.9"/><path d="M0.7 12.6 L3.2 6 H15.3 L12.5 12.6 Z" fill="url(#gfold)" stroke="#8a7440" stroke-width="0.8"/><path d="M1 12.9 H12.5" stroke="#2a2000" stroke-width="0.9"/><path d="M7 7.8 L8.2 1.2 Q9.3 0.2 10.3 1.2 L10.6 2.6 H11.6 L12 1.2 Q13 0.2 14 1.2 L15.3 7.8 Q13.6 8.8 12.3 7.8 L11.8 5 H10.6 L10 7.8 Q8.5 8.8 7 7.8 Z" fill="#33363e"/><path d="M8.5 3.2 L8.1 6.8 M13.7 3.2 L14.1 6.8" stroke="#e4e6ec" stroke-width="0.9"/></svg>
<svg style="left:1085px;top:48px" width="16" height="16" viewBox="0 0 16 16"><rect x="4.5" y="0.5" width="11" height="9.5" fill="url(#gdoc)" stroke="#9aa8c8" stroke-width="0.8"/><rect x="4" y="0" width="12" height="2.4" fill="url(#gtitle)"/><path d="M15.5 2.4 V10 H4.5" fill="none" stroke="#1e2f52" stroke-width="1.1"/><path d="M0.3 4.5 H3 L3.8 5.5 H7.5 V10 H0.3 Z" fill="url(#gfold)" stroke="#a8903a" stroke-width="0.6"/><path d="M10.5 11.5 L14.5 15" stroke="#d8a830" stroke-width="2"/><path d="M10.5 11.5 L12 12.8" stroke="#8a8a8a" stroke-width="1.6"/><circle cx="8.3" cy="9" r="3" fill="#dff0ff" fill-opacity="0.9" stroke="#8098b8" stroke-width="1"/></svg>
<svg style="left:1107px;top:48px" width="16" height="16" viewBox="0 0 16 16"><rect x="0.5" y="4.5" width="11" height="10" fill="#fff" stroke="#a8b4cc" stroke-width="0.8"/><rect x="0.5" y="4" width="2.5" height="2" fill="#5a8ae0"/><path d="M11.7 7 V14.7 H0.5" fill="none" stroke="#3a4a6a" stroke-width="1.1"/><path d="M2 10 h2 M5 10 h5 M2 12.5 h2 M5 12.5 h5" stroke="#6a8ad8" stroke-width="1"/><path d="M3 5.5 L6.5 1 L14 0.8 V5 L9 5.5 L7 8.5 Z" fill="#f6c830" stroke="#a87808" stroke-width="0.6"/><path d="M4.5 5 L7 2 M5.8 6 L8.2 3 M7 7 L9 4.5" stroke="#8a6200" stroke-width="0.6"/><rect x="14.3" y="0.5" width="1.5" height="5" fill="#2aa040"/></svg>
<svg style="left:1129px;top:49px" width="16" height="16" viewBox="0 0 16 16"><path d="M3.5 3.5 L13.5 14" stroke="#9aa4b8" stroke-width="2.2"/><path d="M3.5 3.5 L13.5 14" stroke="#eef1f6" stroke-width="0.9"/><path d="M1 4.5 A2.8 2.8 0 0 1 4.6 0.8 L3.2 2.6 L4.2 3.8 Z" fill="#8a94aa" stroke="#6a748c" stroke-width="0.5"/><path d="M1.5 13.6 L7.6 6.6" stroke="#cc1818" stroke-width="2.6" stroke-linecap="round"/><path d="M1.7 12.6 L7 6.6" stroke="#ff8070" stroke-width="0.7"/><path d="M7.4 6.8 L9.6 4.4" stroke="#b8bfcc" stroke-width="2"/><path d="M8.2 3.4 Q10.5 -0.2 13.6 2.6 L15.6 5 L14.6 6 L12.8 4.2 Q11.6 3.4 10.8 4.4 L10 5.4 Z" fill="#e8ebf2" stroke="#7a849c" stroke-width="0.7"/></svg>
<svg style="left:1151px;top:48px" width="16" height="16" viewBox="0 0 16 16"><rect x="0.5" y="0.5" width="15" height="14" fill="url(#gdoc)" stroke="#9aa8c8" stroke-width="0.8"/><rect x="0" y="0" width="16" height="2.4" fill="url(#gtitle)"/><path d="M15.5 2.4 V14.5 H0.5" fill="none" stroke="#1e2f52" stroke-width="1.1"/><circle cx="8" cy="9" r="3.8" fill="url(#gglobe)"/><path d="M5.5 7 Q7 5.5 8.5 6.5 Q9 8 7.5 9 Q6.5 10.5 7.5 12 Q5 11 5.5 7 Z M10 8 Q11.5 8.5 11 10.5 Q10 11 9.5 9.5 Z" fill="#3cb030"/></svg>
<svg style="left:16px;top:73px" width="16" height="16" viewBox="0 0 16 16"><rect x="0.5" y="1.5" width="8.5" height="7" fill="#d6d9de" stroke="#b9bdc5" stroke-width="1"/><rect x="2" y="3" width="5.5" height="4" fill="#a4a8b0"/><rect x="0.8" y="9.5" width="8.5" height="2.5" fill="#dfe2e6" stroke="#b0b4bc" stroke-width="0.8"/><rect x="11.5" y="1.5" width="3.6" height="6.5" rx="1" fill="#e4e6ea" stroke="#b4b8c0" stroke-width="1"/><path d="M4.5 12.5 V15.5 H13.5 V10" fill="none" stroke="#a8acb4" stroke-width="1"/><path d="M11.3 11.2 L13.5 9 L15.7 11.2" fill="none" stroke="#a8acb4" stroke-width="1.2"/></svg>
<svg style="left:38px;top:73px" width="16" height="16" viewBox="0 0 16 16"><rect x="0.5" y="0.5" width="4" height="7" rx="1.2" fill="#fff" stroke="#5a6478" stroke-width="1"/><path d="M1.3 3 h2.4" stroke="#b8c4e0" stroke-width="0.8"/><rect x="5.5" y="4.5" width="4" height="7" rx="1.2" fill="#fff" stroke="#5a6478" stroke-width="1"/><path d="M6.3 7 h2.4" stroke="#b8c4e0" stroke-width="0.8"/><rect x="11.5" y="0.5" width="4" height="7" rx="1.2" fill="#fff" stroke="#5a6478" stroke-width="1"/><path d="M12.3 3 h2.4" stroke="#b8c4e0" stroke-width="0.8"/><path d="M2.5 8 V14.5 H8.5 V12" fill="none" stroke="#1a9a1a" stroke-width="1.1"/><path d="M13.5 8 V12 M8.5 14.5 H11" stroke="#ff2010" stroke-width="1.1" fill="none"/><path d="M10.8 11.2 L15.8 16 M15.8 11.2 L10.8 16 M13.3 10.8 V16" stroke="#ff2010" stroke-width="1.2"/><rect x="2.5" y="5.8" width="1.2" height="1.2" fill="#38b038"/><rect x="7.5" y="9.8" width="1.2" height="1.2" fill="#38b038"/><rect x="13.5" y="5.8" width="1.2" height="1.2" fill="#ff5030"/></svg>
<svg style="left:244.5px;top:73.8px" width="16" height="16" viewBox="0 0 16 16"><path d="M3 0.3 C5.2 0.3 5.6 2.2 4.8 4.6 L3.6 9 H2.6 L1.2 4.6 C0.4 2.2 0.8 0.3 3 0.3 Z" fill="#e8421a"/><path d="M2.2 1.2 C1.6 2 1.7 3.2 2.2 4.6" stroke="#ff9a78" stroke-width="0.8" fill="none"/><path d="M3 10.2 L4.3 11.6 L3 13 L1.7 11.6 Z" fill="#e8421a"/></svg>
<svg style="left:316px;top:74.7px" width="16" height="16" viewBox="0 0 16 16"><path d="M0 0.2 L6.6 5.8 L0 11.4 Z" fill="url(#ggreen)"/><path d="M0 0.2 L6.6 5.8 L0 11.4 Z" fill="none" stroke="#1a6a10" stroke-width="0.5"/></svg>
<svg style="left:380.4px;top:75.8px" width="16" height="16" viewBox="0 0 16 16"><rect x="0" y="0" width="8.6" height="8" fill="#9a9da3"/><rect x="1" y="1" width="6.6" height="6" fill="#a6a9ae"/><rect x="0" y="8" width="8.6" height="0.8" fill="#d8dce4"/></svg>
<svg style="left:400.7px;top:75.8px" width="16" height="16" viewBox="0 0 16 16"><path d="M0.8 6.5 L4.8 10 L13 0.8" fill="none" stroke="#2a5cc8" stroke-width="2.2" stroke-linejoin="miter"/><path d="M1.5 6.2 L4.7 8.8 L12 0.8" fill="none" stroke="#6a98f0" stroke-width="0.7"/></svg>
<svg style="left:422px;top:73px" width="16" height="16" viewBox="0 0 16 16"><rect x="0" y="0" width="5" height="5" fill="url(#gblue)"/><rect x="1.2" y="1" width="2" height="2.5" fill="#bfe0ff"/><rect x="10" y="0" width="5" height="5" fill="url(#gblue)"/><rect x="11.2" y="1" width="2" height="2.5" fill="#bfe0ff"/><rect x="0" y="11" width="5" height="5" fill="#20c820"/><rect x="1.3" y="12.3" width="2" height="2" fill="#90f090"/><path d="M6 1.8 H9.5 M6 1.8 L7.5 0.6 M6 1.8 L7.5 3" stroke="#4a6aa8" stroke-width="0.9" fill="none"/><path d="M2.5 10.5 V7 M2.5 7 L1.3 8.4 M2.5 7 L3.7 8.4" stroke="#4a6aa8" stroke-width="0.9" fill="none"/><path d="M7.5 6.5 H15 V12 L11.5 15.3 L8.8 15.3 L9.8 12.8 H7.5 Z" fill="#fff" stroke="#30343c" stroke-width="0.9"/><path d="M9 12.5 L14.5 11 L11.5 14.5 Z" fill="#7aa8f0"/></svg>
<svg style="left:444.3px;top:73px" width="16" height="16" viewBox="0 0 16 16"><rect x="4.5" y="0.5" width="10" height="9" fill="#f4f7fd" stroke="#b4c0dc" stroke-width="0.8"/><rect x="4.5" y="0.5" width="10" height="1.6" fill="#cfe0fa"/><path d="M6 4 h3 M10 4 h3 M6 6 h3 M10 6 h3" stroke="#c0c8dc" stroke-width="1"/><rect x="0.5" y="5.5" width="10" height="9" fill="#f4f7fd" stroke="#a8b4d0" stroke-width="0.8"/><rect x="0.5" y="5.5" width="10" height="1.6" fill="#b8d0f8"/><path d="M2 10 h2.5 M2 12.5 h2.5 M6 12.5 h3" stroke="#c0c8dc" stroke-width="1"/><rect x="4.5" y="6.5" width="6.5" height="3.6" fill="#fff" stroke="#3a4478" stroke-width="1.2"/><path d="M6.3 8.3 h3" stroke="#283060" stroke-width="1.2"/></svg>
<svg style="left:468.3px;top:73px" width="16" height="16" viewBox="0 0 16 16"><rect x="0.5" y="0.5" width="10.5" height="14" fill="#fff" stroke="#8a96b4" stroke-width="0.8"/><path d="M11.3 0.5 V14.8 H0.5" fill="none" stroke="#283454" stroke-width="1.2"/><path d="M2 2.5 h7.5 M2 4.5 h7.5 M2 6.5 h7.5" stroke="#c8d0e4" stroke-width="1"/><rect x="1" y="8.5" width="10" height="6" fill="#d4def4"/><path d="M1 8.5 H11" stroke="#5a6890" stroke-width="0.8"/><path d="M2 10.5 h1 M4 10.5 h5.5 M2 12.8 h1 M4 12.8 h5.5" stroke="#283454" stroke-width="1.1"/></svg>
<svg style="left:495px;top:73px" width="16" height="16" viewBox="0 0 16 16"><rect x="0" y="0" width="5" height="5" fill="url(#gblue)"/><rect x="1.2" y="1" width="2" height="2.5" fill="#bfe0ff"/><rect x="10" y="0" width="5" height="5" fill="url(#gblue)"/><rect x="11.2" y="1" width="2" height="2.5" fill="#bfe0ff"/><rect x="0" y="11" width="5" height="5" fill="#20c820"/><rect x="1.3" y="12.3" width="2" height="2" fill="#90f090"/><path d="M6 1.8 H9.5 M6 1.8 L7.5 0.6 M6 1.8 L7.5 3" stroke="#4a6aa8" stroke-width="0.9" fill="none"/><path d="M2.5 10.5 V7 M2.5 7 L1.3 8.4 M2.5 7 L3.7 8.4" stroke="#4a6aa8" stroke-width="0.9" fill="none"/></svg>
<svg style="left:516px;top:73px" width="16" height="16" viewBox="0 0 16 16"><rect x="0.5" y="2.5" width="2.5" height="6" fill="#1a7a1a"/><rect x="1.2" y="3" width="0.8" height="5" fill="#6ad06a"/><rect x="3.2" y="1" width="2.5" height="7.5" fill="#5a48b8"/><rect x="3.8" y="1.5" width="0.8" height="6.5" fill="#a898f0"/><rect x="6" y="0.5" width="4" height="4" fill="#f4f4f8" stroke="#8a8a9a" stroke-width="0.6"/><path d="M0 8.8 H7" stroke="#101820" stroke-width="0.9"/><rect x="7" y="4.5" width="8" height="7" fill="url(#gblue)" stroke="#9aa4c0" stroke-width="1"/><rect x="8.3" y="5.8" width="5.4" height="4.4" fill="#2a6af0"/><rect x="8.8" y="6.2" width="2" height="1.6" fill="#8ac0ff"/><rect x="7" y="12.3" width="8.5" height="2.7" fill="#e8ecf4" stroke="#7a86a8" stroke-width="0.8"/><path d="M8 13.6 h2" stroke="#f0d020" stroke-width="0.9"/><path d="M7 15.3 H15.7" stroke="#283454" stroke-width="0.8"/></svg>
<svg style="left:545px;top:73px" width="16" height="16" viewBox="0 0 16 16"><rect x="0" y="0" width="11" height="6" fill="#e6ecf8"/><path d="M1.3 0.5 v1.8 M6.3 0.5 v1.8 M1.3 3.5 v1.8" stroke="#1a1a1a" stroke-width="0.9"/><circle cx="3.8" cy="1.4" r="0.9" fill="none" stroke="#1a1a1a" stroke-width="0.8"/><circle cx="8.8" cy="1.4" r="0.9" fill="none" stroke="#1a1a1a" stroke-width="0.8"/><circle cx="3" cy="4.6" r="0.9" fill="none" stroke="#1a1a1a" stroke-width="0.8"/><path d="M6.5 3.5 H12.5 L15.5 6.5 V15 H6.5 Z" fill="#fff" stroke="#a8b0c4" stroke-width="0.7"/><path d="M15.7 6.5 V15.3 H6" fill="none" stroke="#283454" stroke-width="1.2"/><path d="M12.5 3.5 V6.5 H15.5" fill="#dfe6f4" stroke="#283454" stroke-width="0.8"/><path d="M9 7.5 h2.5 M9 9.5 h4.5 M9 11.5 h4.5 M9 13.5 h4.5" stroke="#6a7288" stroke-width="0.8"/><path d="M1.3 6.5 Q0.2 11.5 4.5 12.3" fill="none" stroke="#2858d0" stroke-width="2"/><path d="M4 9.2 L8 12.4 L4 15.6 Z" fill="#2858d0"/><path d="M1.6 7 Q1 10.5 4.3 11.6" fill="none" stroke="#78a8f8" stroke-width="0.7"/></svg>
<svg style="left:568px;top:73px" width="16" height="16" viewBox="0 0 16 16"><rect x="0" y="0" width="11" height="6" fill="#f0e8c8" fill-opacity="0.5"/><path d="M1.3 0.5 v1.8 M6.3 0.5 v1.8 M1.3 3.5 v1.8" stroke="#1a1a1a" stroke-width="0.9"/><circle cx="3.8" cy="1.4" r="0.9" fill="none" stroke="#1a1a1a" stroke-width="0.8"/><circle cx="8.8" cy="1.4" r="0.9" fill="none" stroke="#1a1a1a" stroke-width="0.8"/><circle cx="3" cy="4.6" r="0.9" fill="none" stroke="#1a1a1a" stroke-width="0.8"/><rect x="4.5" y="3.5" width="11" height="12" fill="#fff" stroke="#8a9cc8" stroke-width="0.8"/><rect x="4.5" y="3.5" width="11" height="2.5" fill="#c8d6f0"/><path d="M8.2 3.5 V15.5 M11.9 3.5 V15.5 M4.5 6 H15.5 M4.5 9.2 H15.5 M4.5 12.4 H15.5" stroke="#8a9cc8" stroke-width="0.9"/><rect x="12.3" y="12.8" width="2.8" height="2.4" fill="#a8c4f0"/><path d="M1.3 6.5 Q0.2 11.5 4.5 12.3" fill="none" stroke="#2858d0" stroke-width="2"/><path d="M4 9.2 L8 12.4 L4 15.6 Z" fill="#2858d0"/><path d="M1.6 7 Q1 10.5 4.3 11.6" fill="none" stroke="#78a8f8" stroke-width="0.7"/></svg>
<svg style="left:589px;top:73px" width="16" height="16" viewBox="0 0 16 16"><rect x="0" y="0" width="11" height="6" fill="#e6ecf8"/><path d="M1.3 0.5 v1.8 M6.3 0.5 v1.8 M1.3 3.5 v1.8" stroke="#1a1a1a" stroke-width="0.9"/><circle cx="3.8" cy="1.4" r="0.9" fill="none" stroke="#1a1a1a" stroke-width="0.8"/><circle cx="8.8" cy="1.4" r="0.9" fill="none" stroke="#1a1a1a" stroke-width="0.8"/><circle cx="3" cy="4.6" r="0.9" fill="none" stroke="#1a1a1a" stroke-width="0.8"/><path d="M6.5 3.5 H12.5 L15.5 6.5 V15 H6.5 Z" fill="url(#gdoc)" stroke="#a8b0c4" stroke-width="0.7"/><path d="M15.7 6.5 V15.3 H6" fill="none" stroke="#283454" stroke-width="1.2"/><path d="M12.5 3.5 V6.5 H15.5" fill="#dfe6f4" stroke="#283454" stroke-width="0.8"/><path d="M1.3 6.5 Q0.2 11.5 4.5 12.3" fill="none" stroke="#2858d0" stroke-width="2"/><path d="M4 9.2 L8 12.4 L4 15.6 Z" fill="#2858d0"/><path d="M1.6 7 Q1 10.5 4.3 11.6" fill="none" stroke="#78a8f8" stroke-width="0.7"/></svg>
<svg style="left:618.5px;top:73.5px" width="16" height="16" viewBox="0 0 16 16"><path d="M3 1.5 H14" stroke="#f4f6fa" stroke-width="2.75" stroke-linecap="square"/><path d="M3 1.5 H14" stroke="#000" stroke-width="1.15"/><rect x="0.6" y="1" width="1.2" height="1.1" fill="#000"/><path d="M4 4.5 H14 M4 7.8 H14" stroke="#00f0f0" stroke-width="1.4"/><path d="M6 11 H14" stroke="#f4f6fa" stroke-width="2.75" stroke-linecap="square"/><path d="M6 11 H14" stroke="#000" stroke-width="1.15"/><path d="M2.5 14 H14" stroke="#f4f6fa" stroke-width="2.75" stroke-linecap="square"/><path d="M2.5 14 H14" stroke="#000" stroke-width="1.15"/></svg>
<svg style="left:642px;top:73.5px" width="16" height="16" viewBox="0 0 16 16"><path d="M4.5 2.3 Q9.5 -1.2 9.7 3 Q9.6 5 7.5 5.8" fill="none" stroke="#1a2aa8" stroke-width="1.5"/><path d="M0.3 1 H4.5 V5.2 Z" fill="#101a90"/><path d="M3 7.8 H12.5" stroke="#00f0f0" stroke-width="1.4"/><rect x="11" y="4" width="1.5" height="1" fill="#00f0f0"/><path d="M5 11 H12.5" stroke="#f4f6fa" stroke-width="2.75" stroke-linecap="square"/><path d="M5 11 H12.5" stroke="#000" stroke-width="1.15"/><path d="M1.5 14 H12.5" stroke="#f4f6fa" stroke-width="2.75" stroke-linecap="square"/><path d="M1.5 14 H12.5" stroke="#000" stroke-width="1.15"/></svg>
<svg style="left:669px;top:73px" width="16" height="16" viewBox="0 0 16 16"><path d="M1.5 1.5 H15" stroke="#f4f6fa" stroke-width="2.75" stroke-linecap="square"/><path d="M1.5 1.5 H15" stroke="#000" stroke-width="1.15"/><path d="M8 4.3 H15" stroke="#f4f6fa" stroke-width="3.4" stroke-linecap="square"/><path d="M8 4.3 H15" stroke="#000" stroke-width="1.8"/><path d="M8 7.7 H13" stroke="#f4f6fa" stroke-width="3.4" stroke-linecap="square"/><path d="M8 7.7 H13" stroke="#000" stroke-width="1.8"/><path d="M1.5 10.8 H15" stroke="#f4f6fa" stroke-width="2.75" stroke-linecap="square"/><path d="M1.5 10.8 H15" stroke="#000" stroke-width="1.15"/><path d="M1.5 13.8 H7" stroke="#f4f6fa" stroke-width="2.75" stroke-linecap="square"/><path d="M1.5 13.8 H7" stroke="#000" stroke-width="1.15"/><path d="M8 13.8 H13" stroke="#f4f6fa" stroke-width="2.75" stroke-linecap="square"/><path d="M8 13.8 H13" stroke="#000" stroke-width="1.15"/><path d="M6.5 0 V16" stroke="#000" stroke-width="1" stroke-dasharray="1 1.5"/><path d="M0 6 L3 3.3 V5 H6 V7 H3 V8.7 Z" fill="#3a70e0"/></svg>
<svg style="left:691px;top:73px" width="16" height="16" viewBox="0 0 16 16"><path d="M1.5 1.5 H15" stroke="#f4f6fa" stroke-width="2.75" stroke-linecap="square"/><path d="M1.5 1.5 H15" stroke="#000" stroke-width="1.15"/><path d="M8 4.3 H15" stroke="#f4f6fa" stroke-width="3.4" stroke-linecap="square"/><path d="M8 4.3 H15" stroke="#000" stroke-width="1.8"/><path d="M8 7.7 H13" stroke="#f4f6fa" stroke-width="3.4" stroke-linecap="square"/><path d="M8 7.7 H13" stroke="#000" stroke-width="1.8"/><path d="M1.5 10.8 H15" stroke="#f4f6fa" stroke-width="2.75" stroke-linecap="square"/><path d="M1.5 10.8 H15" stroke="#000" stroke-width="1.15"/><path d="M1.5 13.8 H7" stroke="#f4f6fa" stroke-width="2.75" stroke-linecap="square"/><path d="M1.5 13.8 H7" stroke="#000" stroke-width="1.15"/><path d="M8 13.8 H13" stroke="#f4f6fa" stroke-width="2.75" stroke-linecap="square"/><path d="M8 13.8 H13" stroke="#000" stroke-width="1.15"/><path d="M6.5 0 V16" stroke="#000" stroke-width="1" stroke-dasharray="1 1.5"/><path d="M6.5 6 L3.5 3.3 V5 H0.3 V7 H3.5 V8.7 Z" fill="#3a70e0"/></svg>
<svg style="left:720.5px;top:73px" width="16" height="16" viewBox="0 0 16 16"><path d="M0.8 7.5 L3.8 0.8 L6.8 7.5 M2 5.2 H5.6" fill="none" stroke="#000" stroke-width="1.5"/><path d="M8.5 5.5 Q9 2.5 11.5 1.2" fill="none" stroke="#4a6aa8" stroke-width="0.9" stroke-dasharray="1 1"/><path d="M10.3 0.5 H12.5 V2.7" fill="none" stroke="#4a6aa8" stroke-width="0.9"/><path d="M2.5 9.5 Q3.5 13.5 7 14" fill="none" stroke="#4a6aa8" stroke-width="0.9" stroke-dasharray="1 1"/><path d="M6 12.8 L7.6 14 L6 15.2" fill="none" stroke="#4a6aa8" stroke-width="0.9"/><path d="M9.7 8.7 V15 H12.8 Q14.6 15 14.6 13.3 Q14.6 11.9 13 11.8 Q14.3 11.6 14.3 10.2 Q14.3 8.7 12.6 8.7 Z M9.7 11.8 H13" fill="#eeeede" stroke="#a0a090" stroke-width="1.1"/></svg>
<svg style="left:75px;top:125.5px" width="16" height="16" viewBox="0 0 16 16"><rect x="0.5" y="1.5" width="8.5" height="7" fill="#e8ecf4" stroke="#a8b0c4" stroke-width="0.8"/><rect x="1.4" y="2.4" width="6.8" height="5.3" fill="#2a72f8"/><rect x="1.8" y="2.8" width="3" height="2.2" fill="#86b8ff"/><rect x="0.5" y="9.3" width="9" height="2.4" fill="#f0f2f6" stroke="#8a92a8" stroke-width="0.7"/><path d="M1.5 10.5 h2.5" stroke="#e8d020" stroke-width="0.8"/><path d="M0.5 12 H9.7" stroke="#283454" stroke-width="0.8"/><rect x="11.5" y="0.8" width="3.4" height="6.4" rx="1.2" fill="#fff" stroke="#8088a0" stroke-width="0.9"/><path d="M12.3 3.5 h1.8" stroke="#c0c8dc" stroke-width="0.7"/><path d="M4.5 12.5 V15.3 H13.2 V10.5" fill="none" stroke="#1a9a1a" stroke-width="1.1"/><path d="M10.8 11.2 L13.2 8.5 L15.6 11.2 Z" fill="#1a9a1a"/></svg>
<svg style="left:97px;top:125.5px" width="16" height="16" viewBox="0 0 16 16"><rect x="0.5" y="1.5" width="8.5" height="7" fill="#e8ecf4" stroke="#a8b0c4" stroke-width="0.8"/><rect x="1.4" y="2.4" width="6.8" height="5.3" fill="#2a72f8"/><rect x="1.8" y="2.8" width="3" height="2.2" fill="#86b8ff"/><rect x="0.5" y="9.3" width="9" height="2.4" fill="#f0f2f6" stroke="#8a92a8" stroke-width="0.7"/><path d="M1.5 10.5 h2.5" stroke="#e8d020" stroke-width="0.8"/><path d="M0.5 12 H9.7" stroke="#283454" stroke-width="0.8"/><rect x="11.5" y="0.8" width="3.4" height="6.4" rx="1.2" fill="#fff" stroke="#8088a0" stroke-width="0.9"/><path d="M12.3 3.5 h1.8" stroke="#c0c8dc" stroke-width="0.7"/><path d="M4.5 12.5 V15.3 H9.5" fill="none" stroke="#1a9a1a" stroke-width="1.1"/><path d="M13.2 8 V10.5" stroke="#1a9a1a" stroke-width="1"/><path d="M10.8 11 L15.6 15.8 M15.6 11 L10.8 15.8" stroke="#ff1a10" stroke-width="1.5"/></svg>
<svg style="left:122.3px;top:129.8px" width="16" height="16" viewBox="0 0 16 16"><rect x="0" y="0" width="8.6" height="8" fill="#9a9da3"/><rect x="1" y="1" width="6.6" height="6" fill="#a8abb0"/><rect x="0" y="8" width="8.6" height="0.8" fill="#d8dce4"/></svg>
<svg style="left:142.2px;top:127.2px" width="16" height="16" viewBox="0 0 16 16"><path d="M0.3 0.5 H14 L8.8 6 V11.5 L5.6 11.5 V6 Z" fill="url(#ggray2)" stroke="#9a9ea6" stroke-width="0.7"/><path d="M1.5 1.3 H12.5" stroke="#e4e6ea" stroke-width="0.8"/></svg>
<svg style="left:163px;top:125.5px" width="16" height="16" viewBox="0 0 16 16"><rect x="0.5" y="0.5" width="15" height="14" fill="url(#gdoc)" stroke="#9aa8c8" stroke-width="0.8"/><rect x="0" y="0" width="16" height="2.4" fill="url(#gtitle)"/><path d="M15.5 2.4 V14.5 H0.5" fill="none" stroke="#1e2f52" stroke-width="1.1"/><path d="M4.3 8.2 A3.6 3.4 0 0 1 10.6 6" fill="none" stroke="#1e921a" stroke-width="1.3"/><path d="M9 4.2 L12.6 5.2 L10.6 8 Z" fill="#1a9a1a"/><path d="M11.7 9 A3.6 3.4 0 0 1 5.4 11.2" fill="none" stroke="#1e921a" stroke-width="1.3"/><path d="M7 13 L3.4 12 L5.4 9.2 Z" fill="#1a9a1a"/></svg>
<svg style="left:185.5px;top:125.3px" width="16" height="16" viewBox="0 0 16 16"><path d="M3.5 1 H13.5 Q15.5 1 15.3 3 H12.5 V13 Q12.3 15 10 15 H1 Q0 13.5 1.5 12.8 H3.5 Z" fill="#f8f9fc" stroke="#7a86a8" stroke-width="0.9"/><path d="M5 3.5 h6 M5 5.5 h6 M5 7.5 h4" stroke="#b8c4e0" stroke-width="0.8"/><circle cx="11" cy="11" r="4.3" fill="url(#gred)" stroke="#8a0808" stroke-width="0.5"/><path d="M9 9 L13 13 M13 9 L9 13" stroke="#fff" stroke-width="1.5"/></svg>
<svg style="left:32px;top:149px" width="16" height="16" viewBox="0 0 16 16"><path d="M0.3 2.2 A5.6 2 0 0 1 11.5 2.2 V13.3 A5.6 2 0 0 1 0.3 13.3 Z" fill="url(#gy)" stroke="#b88a18" stroke-width="0.5"/><ellipse cx="5.9" cy="2.2" rx="5.3" ry="1.8" fill="#fdeeb0" stroke="#d8a830" stroke-width="0.5"/><circle cx="9.3" cy="11" r="4.8" fill="url(#ggrn)" stroke="#0a4a08" stroke-width="0.5"/><path d="M7.8 8.4 L12.2 11 L7.8 13.6 Z" fill="#fff"/></svg>
<svg style="left:49px;top:169px" width="16" height="16" viewBox="0 0 16 16"><path d="M0.5 3 V0.8 Q0.5 0.3 1 0.3 H5 Q5.6 0.3 5.8 0.8 L6.5 2.5" fill="#f4dc8c" stroke="#b89a48" stroke-width="0.7"/><rect x="0.5" y="2.5" width="14" height="9" fill="url(#gfold)" stroke="#c8a040" stroke-width="0.6"/><path d="M14.8 3 V11.8 H0.5" fill="none" stroke="#3a2a00" stroke-width="1"/></svg>
<svg style="left:49px;top:187px" width="16" height="16" viewBox="0 0 16 16"><path d="M0.5 3 V0.8 Q0.5 0.3 1 0.3 H5 Q5.6 0.3 5.8 0.8 L6.5 2.5" fill="#f4dc8c" stroke="#b89a48" stroke-width="0.7"/><rect x="0.5" y="2.5" width="14" height="9" fill="url(#gfold)" stroke="#c8a040" stroke-width="0.6"/><path d="M14.8 3 V11.8 H0.5" fill="none" stroke="#3a2a00" stroke-width="1"/></svg>
<svg style="left:49px;top:205px" width="16" height="16" viewBox="0 0 16 16"><path d="M0.5 3 V0.8 Q0.5 0.3 1 0.3 H5 Q5.6 0.3 5.8 0.8 L6.5 2.5" fill="#f4dc8c" stroke="#b89a48" stroke-width="0.7"/><rect x="0.5" y="2.5" width="14" height="9" fill="url(#gfold)" stroke="#c8a040" stroke-width="0.6"/><path d="M14.8 3 V11.8 H0.5" fill="none" stroke="#3a2a00" stroke-width="1"/></svg>
<svg style="left:49px;top:223px" width="16" height="16" viewBox="0 0 16 16"><path d="M0.5 3 V0.8 Q0.5 0.3 1 0.3 H5 Q5.6 0.3 5.8 0.8 L6.5 2.5" fill="#f4dc8c" stroke="#b89a48" stroke-width="0.7"/><rect x="0.5" y="2.5" width="14" height="9" fill="url(#gfold)" stroke="#c8a040" stroke-width="0.6"/><path d="M14.8 3 V11.8 H0.5" fill="none" stroke="#3a2a00" stroke-width="1"/></svg>
<svg style="left:49px;top:241px" width="16" height="16" viewBox="0 0 16 16"><path d="M0.5 3 V0.8 Q0.5 0.3 1 0.3 H5 Q5.6 0.3 5.8 0.8 L6.5 2.5" fill="#f4dc8c" stroke="#b89a48" stroke-width="0.7"/><rect x="0.5" y="2.5" width="14" height="9" fill="url(#gfold)" stroke="#c8a040" stroke-width="0.6"/><path d="M14.8 3 V11.8 H0.5" fill="none" stroke="#3a2a00" stroke-width="1"/></svg>
<svg style="left:37.5px;top:54px" width="6" height="4" viewBox="0 0 6 4"><path d="M0 0 H6 L3 3.2 Z" fill="#0e1a38"/></svg>
<svg style="left:70.5px;top:54px" width="6" height="4" viewBox="0 0 6 4"><path d="M0 0 H6 L3 3.2 Z" fill="#8b8b8b"/></svg>
<svg style="left:436.5px;top:55px" width="6" height="4" viewBox="0 0 6 4"><path d="M0 0 H6 L3 3.2 Z" fill="#8b8b8b"/></svg>
<svg style="left:471.5px;top:55px" width="6" height="4" viewBox="0 0 6 4"><path d="M0 0 H6 L3 3.2 Z" fill="#8b8b8b"/></svg>
<svg style="left:504.5px;top:54px" width="6" height="4" viewBox="0 0 6 4"><path d="M0 0 H6 L3 3.2 Z" fill="#8b8b8b"/></svg>
<svg style="left:1172.5px;top:54px" width="6" height="4" viewBox="0 0 6 4"><path d="M0 0 H6 L3 3.2 Z" fill="#0e1a38"/></svg>
<svg style="left:1063.5px;top:55px" width="6" height="4" viewBox="0 0 6 4"><path d="M0 0 H6 L3 3.2 Z" fill="#0e1a38"/></svg>
<svg style="left:675.5px;top:55px" width="6" height="4" viewBox="0 0 6 4"><path d="M0 0 H6 L3 3.2 Z" fill="#a3acbd"/></svg>
<svg style="left:841.5px;top:55px" width="6" height="4" viewBox="0 0 6 4"><path d="M0 0 H6 L3 3.2 Z" fill="#a3acbd"/></svg>
<svg style="left:61.5px;top:131px" width="5" height="3" viewBox="0 0 5 3"><path d="M0 0 H5 L2.5 2.8 Z" fill="#1b2a4a"/></svg>
<svg style="left:1185px;top:58px" width="7" height="7" viewBox="0 0 7 7"><path d="M0.5 0.5 H6.5" stroke="#0e1a38" stroke-width="1"/><path d="M0.5 3 H6.5 L3.5 6 Z" fill="#0e1a38"/></svg>
<svg style="left:743px;top:83px" width="7" height="7" viewBox="0 0 7 7"><path d="M0.5 0.5 H6.5" stroke="#0e1a38" stroke-width="1"/><path d="M0.5 3 H6.5 L3.5 6 Z" fill="#0e1a38"/></svg>
<svg style="left:511px;top:108px" width="8" height="5" viewBox="0 0 8 5"><path d="M0 0 H8 L4 4.3 Z" fill="#dfe3ea"/></svg>
<svg style="left:527px;top:105px" width="8" height="12" viewBox="0 0 8 12"><path d="M1.5 6.5 V0.5 H5.5 V6.5 M4.5 0.5 V6.5" fill="none" stroke="#e6e9ee" stroke-width="1"/><path d="M0 6.5 H7 M3.5 7 V11.5" stroke="#e6e9ee" stroke-width="1" fill="none"/></svg>
<svg style="left:541px;top:106px" width="10" height="8" viewBox="0 0 10 8"><path d="M0.7 0.3 L9.3 7.7 M9.3 0.3 L0.7 7.7" stroke="#e6e9ee" stroke-width="1.3"/></svg>
<svg style="left:787px;top:108px" width="10" height="8" viewBox="0 0 10 8"><path d="M0.7 0.3 L9.3 7.7 M9.3 0.3 L0.7 7.7" stroke="#75633d" stroke-width="1.3"/></svg>
</body>
</html>
